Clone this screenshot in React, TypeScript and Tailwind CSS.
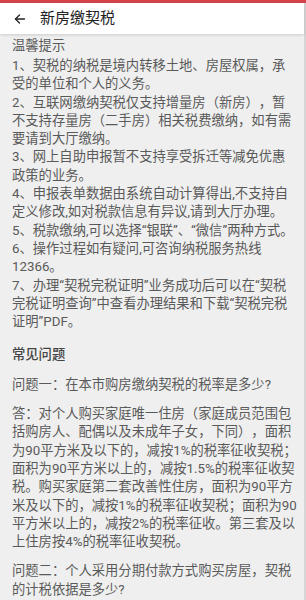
import React from 'react';

const tips = [
  '1、契税的纳税是境内转移土地、房屋权属，承受的单位和个人的义务。',
  '2、互联网缴纳契税仅支持增量房（新房），暂不支持存量房（二手房）相关税费缴纳，如有需要请到大厅缴纳。',
  '3、网上自助申报暂不支持享受拆迁等减免优惠政策的业务。',
  '4、申报表单数据由系统自动计算得出,不支持自定义修改,如对税款信息有异议,请到大厅办理。',
  '5、税款缴纳,可以选择“银联”、“微信”两种方式。',
  '6、操作过程如有疑问,可咨询纳税服务热线12366。',
  '7、办理“契税完税证明”业务成功后可以在“契税完税证明查询”中查看办理结果和下载“契税完税证明”PDF。',
];

const faq = [
  '问题一：在本市购房缴纳契税的税率是多少?',
  '答：对个人购买家庭唯一住房（家庭成员范围包括购房人、配偶以及未成年子女，下同），面积为90平方米及以下的，减按1%的税率征收契税；面积为90平方米以上的，减按1.5%的税率征收契税。购买家庭第二套改善性住房，面积为90平方米及以下的，减按1%的税率征收契税；面积为90平方米以上的，减按2%的税率征收。第三套及以上住房按4%的税率征收契税。',
  '问题二：个人采用分期付款方式购买房屋，契税的计税依据是多少?',
];

export default function App() {
  return (
    <div
      className="flex min-h-[600px] w-[306px] flex-col bg-[#efefef]"
      style={{ fontFamily: "Roboto, 'Noto Sans CJK SC', sans-serif" }}
    >
      <div className="h-[3px] bg-[#d4434a]" />
      <div className="flex flex-1 flex-col border-r-2 border-[#d6d6d6]">
        <header className="relative z-10 flex h-[31px] items-center bg-white shadow-[0_1px_3px_rgba(0,0,0,0.15)]">
          <svg
            className="ml-[14px] h-[12px] w-[12px]"
            viewBox="0 0 24 24"
            fill="none"
            stroke="#222"
            strokeWidth="2.6"
            strokeLinecap="round"
            strokeLinejoin="round"
          >
            <path d="M21 12H3" />
            <path d="M11 4l-8 8 8 8" />
          </svg>
          <h1 className="ml-[14px] text-[15px] leading-none text-[#222]">新房缴契税</h1>
        </header>

        <main className="px-3 pt-[2px] text-[13.3px] leading-[18.3px] text-[#5a5a5a] [text-spacing-trim:space-all]">
          <div className="w-[286px]">
            <h2 className="leading-[20px]">温馨提示</h2>
            <div className="mt-[1px]">
              {tips.map((t) => (
                <p key={t}>{t}</p>
              ))}
            </div>

            <h2 className="mt-[15px] font-medium text-[#444]">常见问题</h2>
            <div className="border-b border-[#d8d8d8] pb-[4px]">
              {faq.map((t) => (
                <p key={t} className="mt-[11px]">
                  {t}
                </p>
              ))}
            </div>
          </div>
        </main>
      </div>
    </div>
  );
}
